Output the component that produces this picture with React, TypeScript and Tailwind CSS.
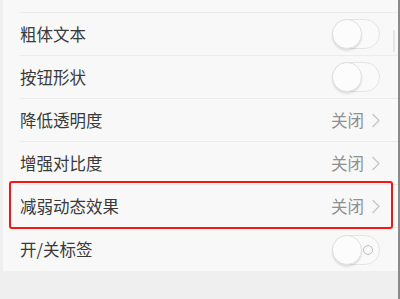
import React from "react";

const font = { fontFamily: '"Noto Sans CJK SC", "Noto Sans", sans-serif' };

function Toggle({ ring = false }: { ring?: boolean }) {
  return (
    <div className="relative w-[48px] h-[30px] rounded-full border border-[#e4e4e4] bg-[#fafafa]">
      <div className="absolute left-[-1px] top-[-1px] w-[30px] h-[30px] rounded-full bg-[#fcfcfc] border border-[#e0e0e0] shadow-[0_2px_2px_rgba(0,0,0,0.10)]" />
      {ring && (
        <div className="absolute right-[6px] top-[9px] w-[10px] h-[10px] rounded-full border-[1.5px] border-[#bdbdbd]" />
      )}
    </div>
  );
}

function Value() {
  return (
    <div className="flex items-center gap-[8px] text-[#909090]">
      <span className="text-[16.5px]">关闭</span>
      <svg width="8" height="15" viewBox="0 0 8 15" fill="none">
        <path d="M1 1.5l6 6-6 6" stroke="#c6c6c6" strokeWidth="1.4" strokeLinecap="round" strokeLinejoin="round" />
      </svg>
    </div>
  );
}

function Row({
  label,
  right,
  last = false,
  highlight = false,
}: {
  label: string;
  right: React.ReactNode;
  last?: boolean;
  highlight?: boolean;
}) {
  return (
    <div className="relative h-[43px] pl-[17px]">
      <div
        className={`h-full flex items-center justify-between pr-[20px] ${
          last ? "" : "border-b border-[#ececec]"
        }`}
      >
        <span className="text-[16.5px] text-[#3a3a3a]">{label}</span>
        {right}
      </div>
      {highlight && (
        <div className="absolute left-[6px] right-[7px] top-[-4px] bottom-[-1px] border-[2.5px] border-[#fa1414] rounded-[3px]" />
      )}
    </div>
  );
}

export default function App() {
  return (
    <div className="relative w-[400px] h-[299px] overflow-hidden bg-[#f8f8f8]" style={font}>
      <div className="flex flex-col h-full border-l-[3px] border-[#efefef]">
        <div className="h-[13px] pl-[17px]">
          <div className="h-full border-b border-[#ececec]" />
        </div>
        <Row label="粗体文本" right={<Toggle />} />
        <Row label="按钮形状" right={<Toggle />} />
        <Row label="降低透明度" right={<Value />} />
        <Row label="增强对比度" right={<Value />} />
        <Row label="减弱动态效果" right={<Value />} highlight />
        <Row label="开/关标签" right={<Toggle ring />} last />
        <div className="flex-1 bg-[#efefef]" />
      </div>
      <div className="absolute right-0 top-0 bottom-0 w-[2px] bg-[#8a8a8a]" />
      <div className="absolute right-[5px] top-[30px] w-[2px] h-[22px] rounded-full bg-[#e4e4e4]" />
    </div>
  );
}
